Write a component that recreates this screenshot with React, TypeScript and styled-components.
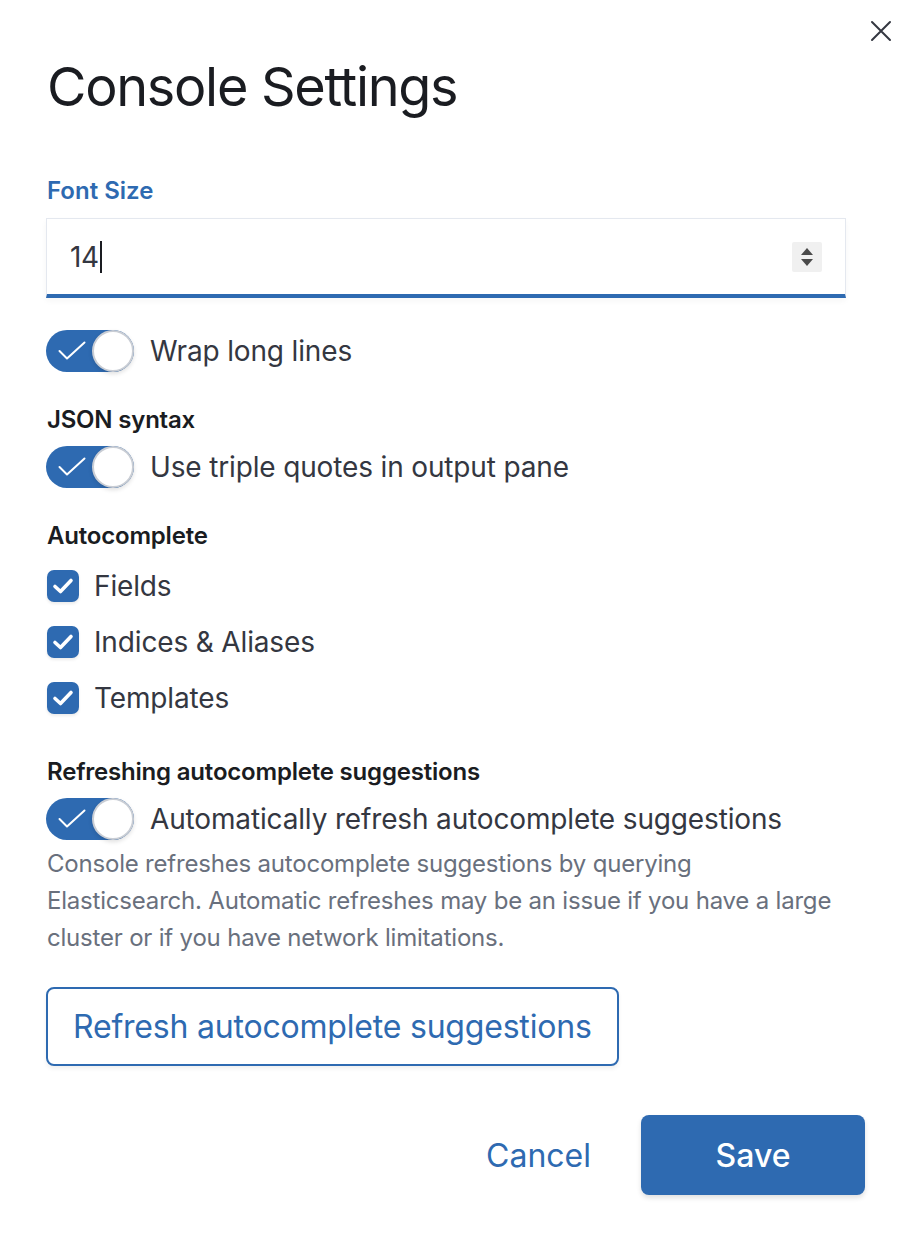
import React from "react";
import styled, { createGlobalStyle } from "styled-components";

const Global = createGlobalStyle`
  html, body { margin: 0; padding: 0; background: #ffffff; }
  body { font-family: Inter, "Noto Sans", sans-serif; color: #343741; -webkit-font-smoothing: antialiased; }
  * { box-sizing: border-box; }
`;

const BLUE = "#2e6ab1";

const Modal = styled.div`
  position: relative;
  width: 914px;
  min-height: 1242px;
  background: #fff;
  padding: 53px 49px 0 46px;
  display: flex;
  flex-direction: column;
`;

const CloseButton = styled.button`
  position: absolute;
  top: 17px;
  right: 19px;
  width: 28px;
  height: 28px;
  padding: 0;
  border: none;
  background: transparent;
  display: flex;
  align-items: center;
  justify-content: center;
  color: #343741;
`;

const Title = styled.h1`
  margin: 0 0 0 1px;
  font-size: 54px;
  line-height: 68px;
  font-weight: 400;
  color: #1a1c21;
  letter-spacing: -1.3px;
`;

const Body = styled.div`
  display: flex;
  flex-direction: column;
  margin-top: 52px;
`;

const FieldLabel = styled.label`
  font-size: 24px;
  line-height: 36px;
  font-weight: 600;
  color: ${BLUE};
  margin-left: 1px;
`;

const InputWrap = styled.div`
  margin-top: 9px;
  width: 800px;
  height: 80px;
  border: 1px solid #e4e8ef;
  border-bottom: 4px solid ${BLUE};
  background: #fff;
  box-shadow: 0 3px 6px rgba(0, 0, 0, 0.04);
  display: flex;
  align-items: center;
  padding: 0 23px 0 23px;
`;

const Value = styled.span`
  font-size: 28px;
  color: #343741;
  flex: 1;
  display: flex;
  align-items: center;
  letter-spacing: -0.3px;
`;

const Caret = styled.span`
  display: inline-block;
  width: 2px;
  height: 32px;
  background: #1a1c21;
  margin-left: 1px;
`;

const Stepper = styled.div`
  width: 30px;
  height: 30px;
  background: #f0f0f0;
  border-radius: 2px;
  display: flex;
  align-items: center;
  justify-content: center;
`;

const SwitchRow = styled.div<{ $mt: number }>`
  display: flex;
  align-items: center;
  gap: 16px;
  margin-top: ${(p) => p.$mt}px;
`;

const Track = styled.span`
  position: relative;
  width: 88px;
  height: 42px;
  border-radius: 21px;
  background: ${BLUE};
  flex-shrink: 0;
`;

const CheckMark = styled.svg`
  position: absolute;
  left: 12px;
  top: 11px;
`;

const Knob = styled.span`
  position: absolute;
  right: 0;
  top: 0;
  width: 42px;
  height: 42px;
  border-radius: 50%;
  background: #fff;
  border: 2px solid #c9cdd4;
  box-shadow: 0 2px 4px rgba(0, 0, 0, 0.12);
`;

const SwitchLabel = styled.span`
  font-size: 28px;
  line-height: 40px;
  color: #343741;
  letter-spacing: -0.15px;
`;

const GroupTitle = styled.div<{ $mt: number }>`
  font-size: 24px;
  line-height: 36px;
  font-weight: 600;
  color: #1a1c21;
  margin-top: ${(p) => p.$mt}px;
  margin-left: 1px;
  letter-spacing: -0.2px;
`;

const CheckList = styled.div`
  display: flex;
  flex-direction: column;
  gap: 24px;
  margin-top: 16px;
`;

const CheckRow = styled.div`
  display: flex;
  align-items: center;
  gap: 15px;
  height: 32px;
`;

const Box = styled.span`
  width: 32px;
  height: 32px;
  border-radius: 7px;
  background: ${BLUE};
  display: flex;
  align-items: center;
  justify-content: center;
  margin-left: 1px;
  box-shadow: 0 2px 3px rgba(0, 0, 0, 0.08);
`;

const CheckText = styled.span`
  font-size: 28px;
  line-height: 40px;
  color: #343741;
  letter-spacing: -0.15px;
`;

const Help = styled.p`
  margin: 5px 0 0 1px;
  font-size: 24px;
  line-height: 37px;
  color: #69707d;
  max-width: 792px;
  letter-spacing: -0.2px;
`;

const OutlineButton = styled.button`
  margin-top: 31px;
  align-self: flex-start;
  height: 79px;
  padding: 0 25px;
  border: 2px solid ${BLUE};
  border-radius: 8px;
  background: #fff;
  color: ${BLUE};
  font-family: inherit;
  font-size: 32px;
  font-weight: 400;
  letter-spacing: -0.2px;
  box-shadow: 0 3px 4px rgba(0, 0, 0, 0.06);
`;

const Footer = styled.div`
  display: flex;
  justify-content: flex-end;
  align-items: center;
  gap: 50px;
  margin-top: 49px;
`;

const TextButton = styled.button`
  border: none;
  background: transparent;
  color: ${BLUE};
  font-family: inherit;
  font-size: 32px;
  padding: 0;
`;

const FillButton = styled.button`
  width: 224px;
  height: 80px;
  border: none;
  border-radius: 8px;
  background: ${BLUE};
  color: #fff;
  font-family: inherit;
  font-size: 32px;
  font-weight: 500;
  box-shadow: 0 3px 5px rgba(0, 0, 0, 0.12);
`;

const Switch = ({ label, mt }: { label: string; mt: number }) => (
  <SwitchRow $mt={mt}>
    <Track>
      <CheckMark width="28" height="20" viewBox="0 0 28 20">
        <path d="M1.5 10 L9 17.5 L26.5 1.5" fill="none" stroke="#fff" strokeWidth="2" strokeLinecap="round" strokeLinejoin="round" />
      </CheckMark>
      <Knob />
    </Track>
    <SwitchLabel>{label}</SwitchLabel>
  </SwitchRow>
);

const Check = ({ label }: { label: string }) => (
  <CheckRow>
    <Box>
      <svg width="22" height="18" viewBox="0 0 22 18">
        <path d="M3 9.5 L8.5 14.5 L19 3.5" fill="none" stroke="#fff" strokeWidth="3.6" strokeLinecap="round" strokeLinejoin="round" />
      </svg>
    </Box>
    <CheckText>{label}</CheckText>
  </CheckRow>
);

export default function App() {
  return (
    <>
      <Global />
      <Modal>
        <CloseButton aria-label="Close">
          <svg width="22" height="22" viewBox="0 0 22 22">
            <path d="M2 2 L20 20 M20 2 L2 20" stroke="#343741" strokeWidth="2" strokeLinecap="round" />
          </svg>
        </CloseButton>
        <Title>Console Settings</Title>
        <Body>
          <FieldLabel>Font Size</FieldLabel>
          <InputWrap>
            <Value>
              14
              <Caret />
            </Value>
            <Stepper>
              <svg width="16" height="22" viewBox="0 0 16 22">
                <path d="M8 2 L14 9 L2 9 Z" fill="#4a4a4a" />
                <path d="M2 13 L14 13 L8 20 Z" fill="#4a4a4a" />
              </svg>
            </Stepper>
          </InputWrap>
          <Switch label="Wrap long lines" mt={32} />
          <GroupTitle $mt={30}>JSON syntax</GroupTitle>
          <Switch label="Use triple quotes in output pane" mt={8} />
          <GroupTitle $mt={30}>Autocomplete</GroupTitle>
          <CheckList>
            <Check label="Fields" />
            <Check label="Indices & Aliases" />
            <Check label="Templates" />
          </CheckList>
          <GroupTitle $mt={40}>Refreshing autocomplete suggestions</GroupTitle>
          <Switch label="Automatically refresh autocomplete suggestions" mt={8} />
          <Help>
            Console refreshes autocomplete suggestions by querying Elasticsearch. Automatic refreshes may be an issue if you have a large cluster or if you have network limitations.
          </Help>
          <OutlineButton>Refresh autocomplete suggestions</OutlineButton>
        </Body>
        <Footer>
          <TextButton>Cancel</TextButton>
          <FillButton>Save</FillButton>
        </Footer>
      </Modal>
    </>
  );
}
